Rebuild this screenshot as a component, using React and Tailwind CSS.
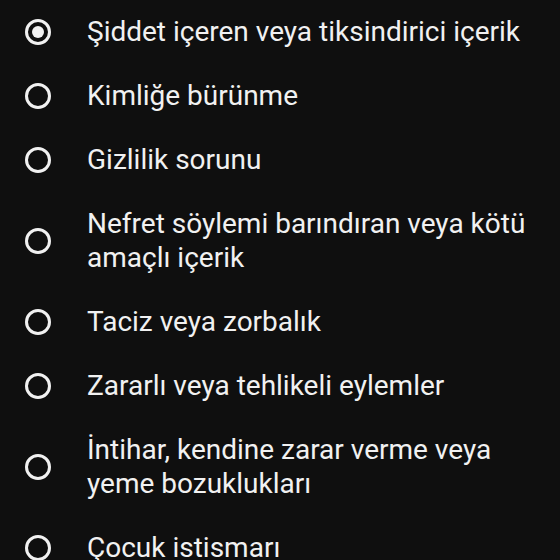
const reasons = [
  'Şiddet içeren veya tiksindirici içerik',
  'Kimliğe bürünme',
  'Gizlilik sorunu',
  'Nefret söylemi barındıran veya kötü amaçlı içerik',
  'Taciz veya zorbalık',
  'Zararlı veya tehlikeli eylemler',
  'İntihar, kendine zarar verme veya yeme bozuklukları',
  'Çocuk istismarı',
]

const Radio = ({ checked }) => (
  <span className="flex h-[26px] w-[26px] shrink-0 items-center justify-center rounded-full border-[3px] border-[#f1f1f1]">
    {checked && <span className="h-[12px] w-[12px] rounded-full bg-[#f1f1f1]" />}
  </span>
)

export default function App() {
  const selected = 0

  return (
    <div className="h-[560px] w-[560px] overflow-hidden bg-[#0f0f0f] font-['Roboto',sans-serif] text-[#f1f1f1]">
      {reasons.map((r, i) => (
        <label key={r} className="flex items-center gap-[36px] py-[15px] pl-[25px] pr-[20px]">
          <Radio checked={i === selected} />
          <span className="text-[28px] leading-[34px]">{r}</span>
        </label>
      ))}
    </div>
  )
}
